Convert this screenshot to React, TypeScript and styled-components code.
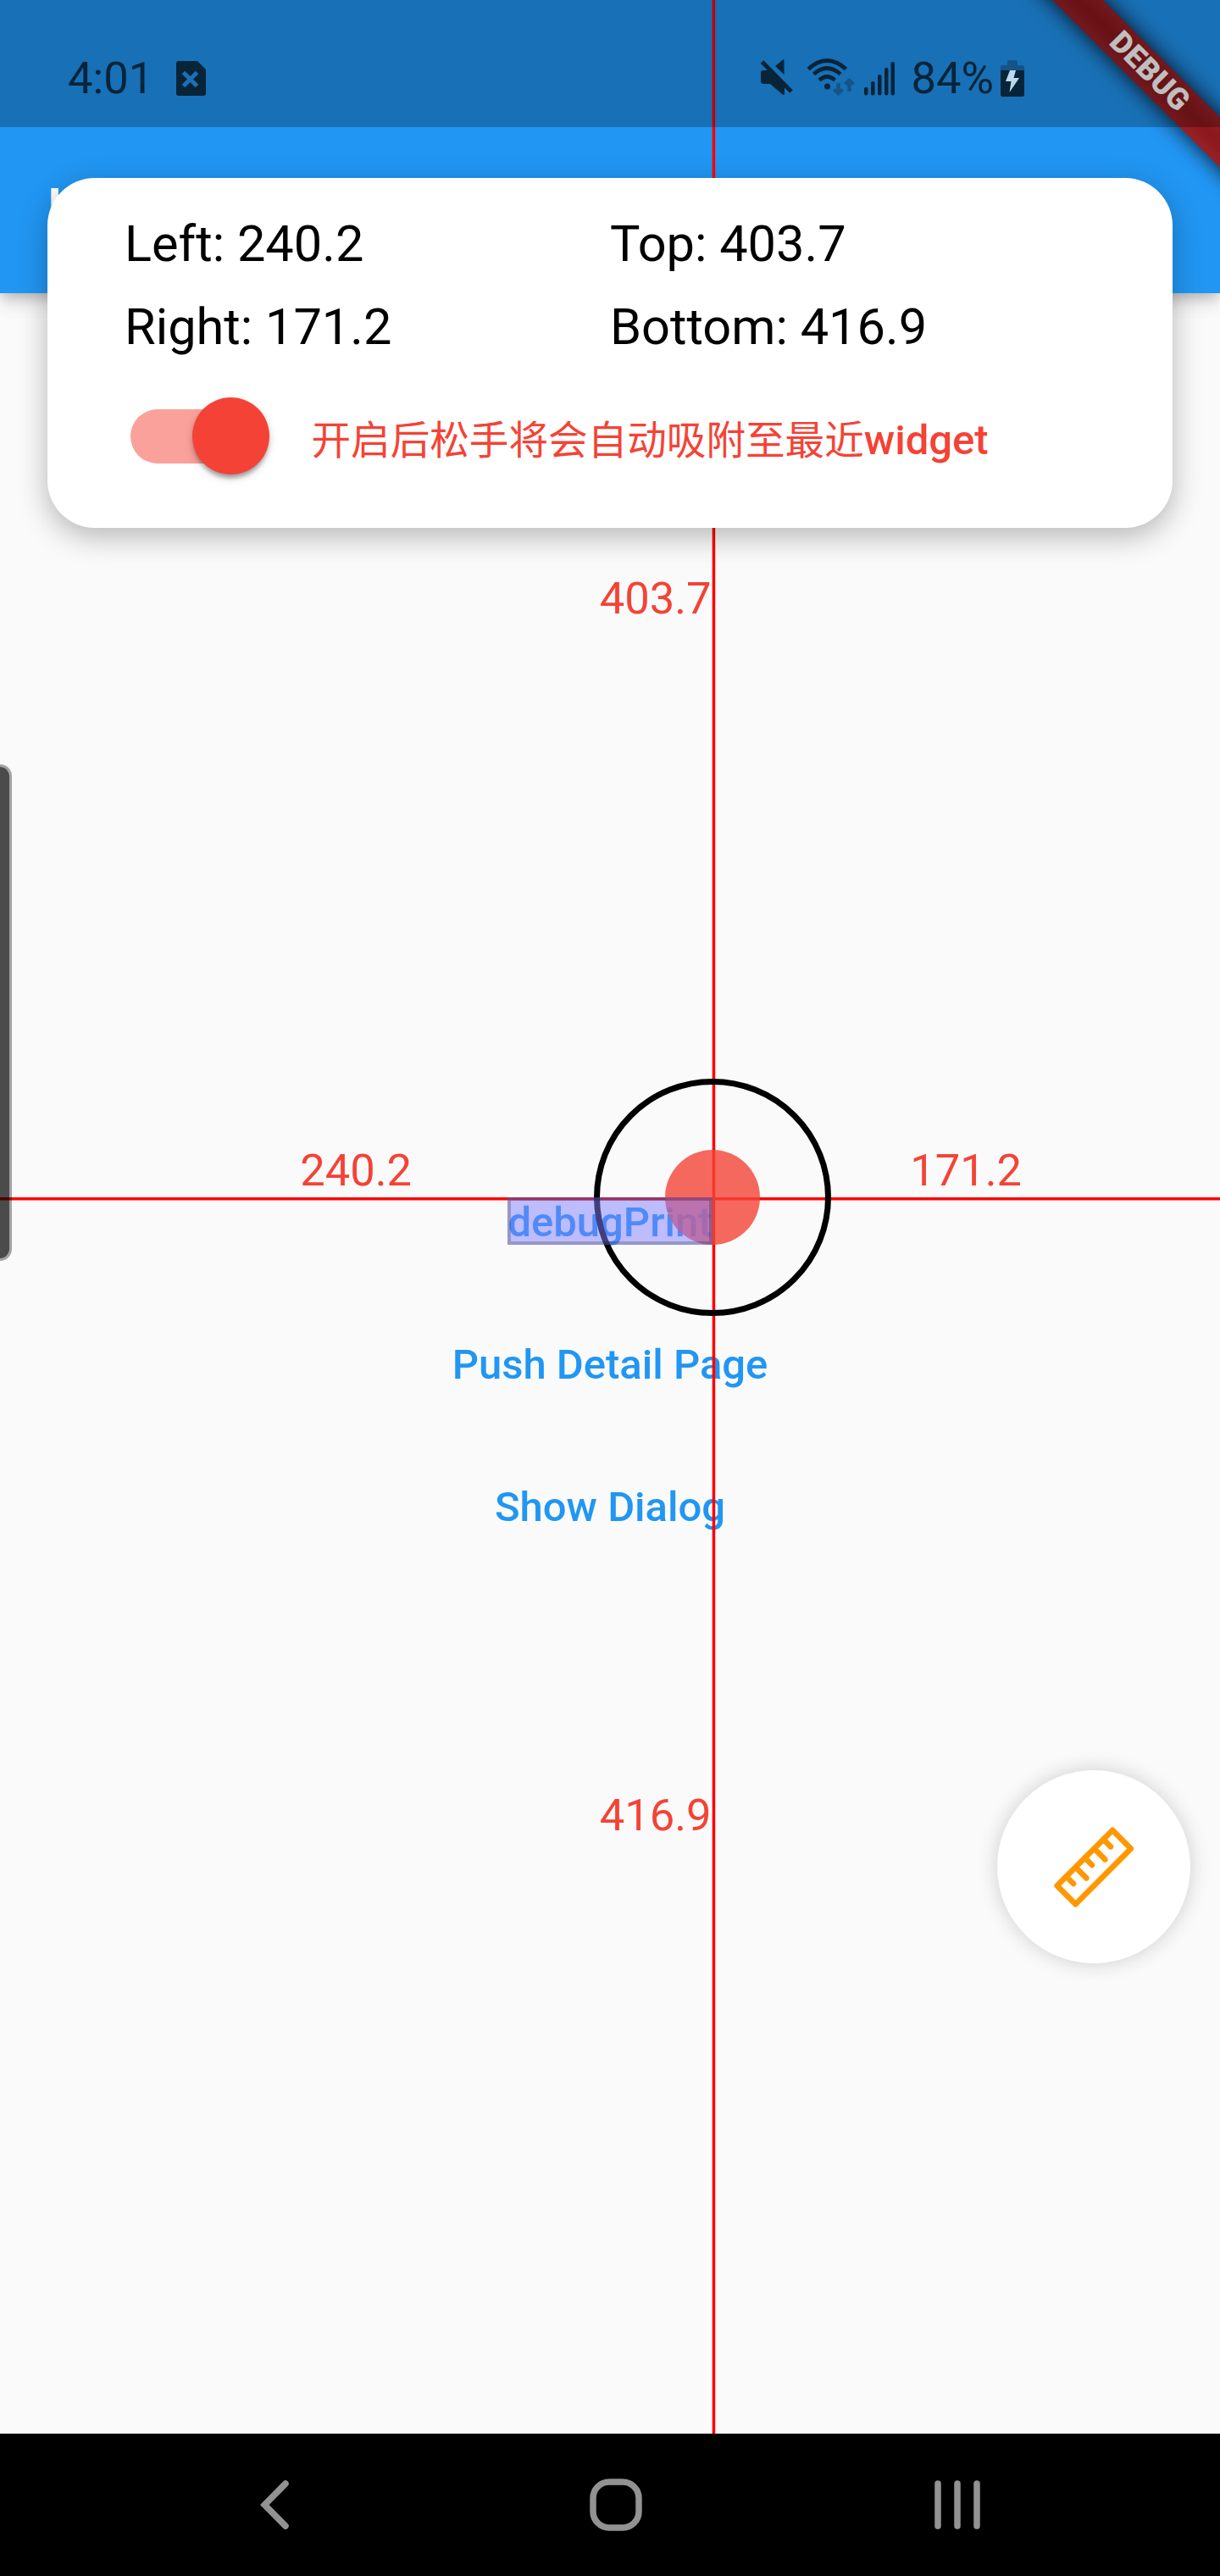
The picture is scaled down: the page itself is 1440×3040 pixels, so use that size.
import React from "react";
import styled, { createGlobalStyle } from "styled-components";

const Global = createGlobalStyle`
  html, body { margin: 0; padding: 0; background: #fafafa; }
  * { box-sizing: border-box; }
`;

const INK = "#082439";
const RED = "#f44336";

const Screen = styled.div`
  position: relative;
  display: flex;
  flex-direction: column;
  width: 1440px;
  height: 3040px;
  overflow: hidden;
  background: #fafafa;
  font-family: Roboto, "Noto Sans CJK SC", sans-serif;
`;

const AppBar = styled.header`
  display: flex;
  align-items: center;
  height: 346px;
  flex: none;
  padding: 150px 56px 0;
  background: #2196f3;
  box-shadow: 0 7px 14px -3px rgba(0, 0, 0, 0.2), 0 14px 18px rgba(0, 0, 0, 0.07), 0 4px 35px rgba(0, 0, 0, 0.06);
`;

const Title = styled.h1`
  margin: 0;
  color: #fff;
  font-size: 70px;
  font-weight: 500;
  line-height: 82px;
`;

const Body = styled.main`
  flex: 1;
  display: flex;
  flex-direction: column;
  align-items: center;
  justify-content: center;
  padding-top: 4px;
`;

const TextButton = styled.button`
  height: 168px;
  padding: 0 28px;
  border: 0;
  background: none;
  color: #2196f3;
  font: 500 49px/56px Roboto, sans-serif;
  white-space: nowrap;
`;

const NavBar = styled.nav`
  display: flex;
  flex: none;
  height: 168px;
  background: #000;
  svg { display: block; }
`;

const Overlay = styled.svg`
  position: absolute;
  left: 0;
  top: 0;
  display: block;
`;

const Distance = styled.span<{ $right: number; $top: number }>`
  position: absolute;
  right: ${(p) => p.$right}px;
  top: ${(p) => p.$top}px;
  color: ${RED};
  font-size: 52.5px;
  line-height: 62px;
`;

const InfoCard = styled.section`
  position: absolute;
  left: 56px;
  top: 210px;
  width: 1328px;
  height: 413px;
  padding: 29px 91px 0;
  border-radius: 56px;
  background: #fff;
  box-shadow: 0 10px 35px rgba(0, 0, 0, 0.28);
`;

const Metrics = styled.div`
  display: grid;
  grid-template-columns: 573px 573px;
  grid-auto-rows: 98px;
  color: #000;
  font-size: 59.5px;
  line-height: 98px;
  white-space: nowrap;
`;

const SwitchRow = styled.div`
  display: flex;
  align-items: center;
  height: 159px;
  padding-left: 7px;
`;

const Track = styled.div`
  display: flex;
  align-items: center;
  justify-content: flex-end;
  width: 150px;
  height: 64px;
  border-radius: 32px;
  background: #faa19b;
`;

const Thumb = styled.div`
  flex: none;
  width: 91px;
  height: 91px;
  margin-right: -14px;
  border-radius: 50%;
  background: ${RED};
  box-shadow: 0 7px 5px -3px rgba(0, 0, 0, 0.2), 0 4px 5px rgba(0, 0, 0, 0.14), 0 4px 12px rgba(0, 0, 0, 0.14);
`;

const Hint = styled.p`
  margin: 11px 0 0 63.5px;
  color: ${RED};
  font-size: 46.6px;
  line-height: 56px;
  white-space: nowrap;
  b { font-weight: 500; font-size: 49px; }
`;

const Fab = styled.button`
  position: absolute;
  left: 1177px;
  top: 2089px;
  display: flex;
  align-items: center;
  justify-content: center;
  width: 228px;
  height: 228px;
  padding: 0;
  border: 0;
  border-radius: 50%;
  background: #fff;
  box-shadow: 0 0 25px rgba(0, 0, 0, 0.18);
`;

const EdgeHandle = styled.div`
  position: absolute;
  left: -20px;
  top: 902px;
  width: 34px;
  height: 586px;
  border: 3px solid rgba(0, 0, 0, 0.35);
  border-radius: 14px;
  background: rgba(0, 0, 0, 0.7);
  background-clip: padding-box;
`;

const Banner = styled.div`
  position: absolute;
  left: 1056.25px;
  top: 62.75px;
  width: 600px;
  height: 42px;
  transform: rotate(45deg);
  &::before {
    content: "";
    position: absolute;
    inset: 0;
    background: rgba(0, 0, 0, 0.85);
    filter: blur(13px);
  }
`;

const BannerLabel = styled.div`
  position: relative;
  height: 42px;
  padding-left: 2px;
  background: linear-gradient(#992029, #8b191d 45%, #8b191d 55%, #992029);
  color: #fff;
  font-size: 35.7px;
  font-weight: 900;
  line-height: 41px;
  letter-spacing: 0.4px;
  text-align: center;
`;

const StatusBar = styled.div`
  position: absolute;
  left: 0;
  top: 0;
  display: flex;
  align-items: center;
  width: 1440px;
  height: 150px;
  padding: 34px 231px 0 80px;
  background: rgba(0, 0, 0, 0.25);
  color: ${INK};
  font-size: 52.5px;
  line-height: 62px;
  svg { display: block; flex: none; }
`;

const StatusGroup = styled.div<{ $gap: number }>`
  display: flex;
  align-items: center;
  gap: ${(p) => p.$gap}px;
`;

const Spacer = styled.div`
  flex: 1;
`;

function StatusIcons() {
  return (
    <svg width="164" height="50" viewBox="894 66 164 50" fill={INK}>
      <path d="M898 85q0-3 3-3h9l16 16v12l-1 1q-1 0-2-1l-14-12h-8q-3 0-3-3z" />
      <path d="M915 77l9-7.500q1.500-.6 1.500.5V87z" />
      <path d="M899.500 72l34.500 35" stroke={INK} strokeWidth="5" />
      <g fill="none" stroke={INK} strokeWidth="4.600">
        <path d="M954 80.500Q976 60.500 998.500 80.500" />
        <path d="M960.500 86.500Q976 72.500 992 86.500" />
        <path d="M967 93.500Q976 85.500 985.500 93.500" />
      </g>
      <circle cx="976.500" cy="101" r="3.500" />
      <g fill="none" stroke="#155487" strokeWidth="4.200">
        <path d="M989.500 97v11M984.500 104.500l5 4.800 5-4.800" />
        <path d="M1002.500 107V95M997.500 98.500l5-4.800 5 4.800" />
      </g>
      <rect x="1020" y="102" width="4.500" height="9.500" rx="2" />
      <rect x="1028" y="95" width="4.500" height="16.500" rx="2" />
      <rect x="1036" y="87" width="4.500" height="24.500" rx="2" />
      <rect x="1044" y="79" width="4.500" height="32.500" rx="2" />
      <rect x="1051.500" y="72" width="4.500" height="39.500" rx="2" />
    </svg>
  );
}

export default function App() {
  return (
    <Screen>
      <Global />
      <AppBar>
        <Title>U</Title>
      </AppBar>
      <Body>
        <TextButton>debugPrint</TextButton>
        <TextButton>Push Detail Page</TextButton>
        <TextButton>Show Dialog</TextButton>
      </Body>
      <NavBar>
        <svg width="1440" height="168" viewBox="0 2872 1440 168" fill="none" stroke="#929292" strokeWidth="7.500">
          <path d="M337 2931L312.300 2956l24.700 25" strokeLinecap="round" />
          <rect x="700" y="2929" width="54" height="54" rx="19" />
          <path d="M1107 2931v50M1130 2931v50M1153 2931v50" strokeLinecap="round" />
        </svg>
      </NavBar>

      <Overlay width="1440" height="2872" viewBox="0 0 1440 2872">
        <rect x="840.700" y="0" width="3.500" height="2872" fill="#f00" />
        <rect x="0" y="1413" width="1440" height="3.500" fill="#f00" />
        <circle cx="841" cy="1413" r="136.500" fill="none" stroke="#000" strokeWidth="7" />
        <circle cx="841" cy="1413" r="56" fill={RED} fillOpacity="0.8" />
        <rect x="599" y="1413" width="242" height="56" fill="#807eff" fillOpacity="0.5" />
        <rect x="601" y="1415" width="238" height="52" fill="none" stroke="#000" strokeOpacity="0.2" strokeWidth="4" />
      </Overlay>
      <Distance $right={600.5} $top={675}>403.7</Distance>
      <Distance $right={600.5} $top={2111}>416.9</Distance>
      <Distance $right={954} $top={1350}>240.2</Distance>
      <Distance $right={234} $top={1350}>171.2</Distance>

      <InfoCard>
        <Metrics>
          <span>Left: 240.2</span>
          <span>Top: 403.7</span>
          <span>Right: 171.2</span>
          <span>Bottom: 416.9</span>
        </Metrics>
        <SwitchRow>
          <Track>
            <Thumb />
          </Track>
          <Hint>
            开启后松手将会自动吸附至最近<b>widget</b>
          </Hint>
        </SwitchRow>
      </InfoCard>

      <Fab>
        <svg width="97" height="97" viewBox="279 283 291 291" fill="none" stroke="#ff9800" strokeWidth="20" strokeLinejoin="round" strokeLinecap="round">
          <path d="M489.500 297.500L554.500 363 358.500 559.500 293 494z" />
          <path d="M457 330l26 26M424.500 362.500l38.500 38.500M391.500 395.500l25.500 25.500M358.500 428.500l38.500 38.500M325.500 461.500l25.500 25.500" />
        </svg>
      </Fab>

      <EdgeHandle />
      <Banner>
        <BannerLabel>DEBUG</BannerLabel>
      </Banner>

      <StatusBar>
        <StatusGroup $gap={27}>
          <span>4:01</span>
          <svg width="35" height="41" viewBox="0 0 35 41">
            <path d="M3 0H25L35 10V38q0 3-3 3H3q-3 0-3-3V3q0-3 3-3z" fill={INK} />
            <path d="M8.500 13.500l16 16M24.500 13.500l-16 16" stroke="#1b70b6" strokeWidth="5" />
          </svg>
        </StatusGroup>
        <Spacer />
        <StatusGroup $gap={18}>
          <StatusIcons />
          <StatusGroup $gap={8}>
            <span>84%</span>
            <svg width="28" height="43" viewBox="0 0 28 43">
              <path d="M8 2q0-2 2-2h8q2 0 2 2v4h6q2 0 2 2v5H0V8q0-2 2-2h6z" fill="#155487" />
              <path d="M0 12H28V41q0 2-2 2H2q-2 0-2-2z" fill={INK} />
              <path d="M11 12h7l-2.500 9H22L10.500 38l2-13H6z" fill="#bcd7ee" />
            </svg>
          </StatusGroup>
        </StatusGroup>
      </StatusBar>
    </Screen>
  );
}
